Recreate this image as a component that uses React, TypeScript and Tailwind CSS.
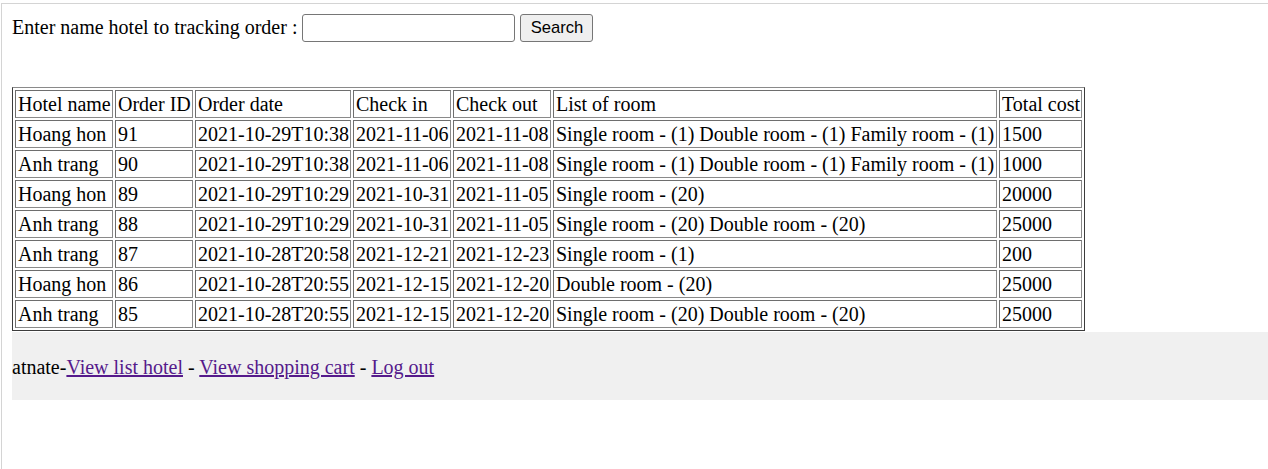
const rows = [
  ["Hoang hon", "91", "2021-10-29T10:38", "2021-11-06", "2021-11-08", "Single room - (1) Double room - (1) Family room - (1)", "1500"],
  ["Anh trang", "90", "2021-10-29T10:38", "2021-11-06", "2021-11-08", "Single room - (1) Double room - (1) Family room - (1)", "1000"],
  ["Hoang hon", "89", "2021-10-29T10:29", "2021-10-31", "2021-11-05", "Single room - (20)", "20000"],
  ["Anh trang", "88", "2021-10-29T10:29", "2021-10-31", "2021-11-05", "Single room - (20) Double room - (20)", "25000"],
  ["Anh trang", "87", "2021-10-28T20:58", "2021-12-21", "2021-12-23", "Single room - (1)", "200"],
  ["Hoang hon", "86", "2021-10-28T20:55", "2021-12-15", "2021-12-20", "Double room - (20)", "25000"],
  ["Anh trang", "85", "2021-10-28T20:55", "2021-12-15", "2021-12-20", "Single room - (20) Double room - (20)", "25000"],
];

const head = ["Hotel name", "Order ID", "Order date", "Check in", "Check out", "List of room", "Total cost"];

const cellCls =
  "border border-t-[#6e6e6e] border-l-[#6e6e6e] border-r-[#8a8a8a] border-b-[#8a8a8a] pl-[2px] pr-0 pt-[2px] pb-px whitespace-nowrap overflow-hidden text-left align-middle";

const App = () => {
  return (
    <div className="mt-[3px] ml-px min-h-[466px] border-t border-l border-[#d4d4d4] bg-white pl-[10px] pt-[10px] font-['Liberation_Serif',serif] text-[20px] leading-[23px] text-black">
      <div className="flex h-[28px] items-center">
        <span className="mb-[2px]">Enter name hotel to tracking order :</span>
        <input
          type="text"
          className="ml-[5px] h-[28px] w-[213px] rounded-[3px] border border-[#767676] bg-white px-[2px] outline-none"
        />
        <button className="ml-[5px] h-[28px] w-[73px] rounded-[3px] border border-[#767676] bg-[#efefef] font-['Liberation_Sans',Arial,sans-serif] text-[16.6px] leading-none text-black">
          Search
        </button>
      </div>

      <table className="mt-[45px] w-[1073px] table-fixed border-separate border-spacing-[2px] border border-t-[#8a8a8a] border-l-[#3c3c3c] border-r-[#3c3c3c] border-b-[#3c3c3c]">
        <colgroup>
          <col className="w-[98px]" />
          <col className="w-[78px]" />
          <col className="w-[156px]" />
          <col className="w-[98px]" />
          <col className="w-[98px]" />
          <col className="w-[444px]" />
          <col className="w-[83px]" />
        </colgroup>
        <tbody>
          <tr>
            {head.map((h) => (
              <td key={h} className={cellCls}>{h}</td>
            ))}
          </tr>
          {rows.map((r) => (
            <tr key={r[1]}>
              {r.map((c, i) => (
                <td key={i} className={cellCls}>{c}</td>
              ))}
            </tr>
          ))}
        </tbody>
      </table>

      <div className="mt-px flex h-[68px] items-center bg-[#f0f0f0] pt-[2px]">
        <p>
          atnate-
          <a href="#" className="text-[#551a8b] underline">View list hotel</a>
          {" - "}
          <a href="#" className="text-[#551a8b] underline">View shopping cart</a>
          {" - "}
          <a href="#" className="text-[#551a8b] underline">Log out</a>
        </p>
      </div>
    </div>
  );
};

export default App;
